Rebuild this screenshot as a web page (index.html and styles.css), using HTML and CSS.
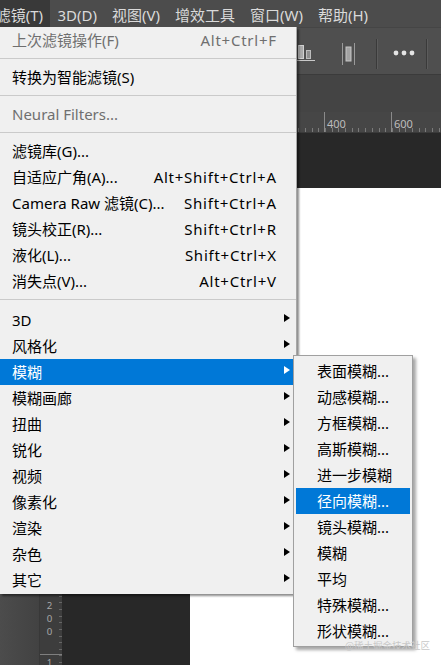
FILE: index.html
```html
<!DOCTYPE html>
<html lang="zh-CN">
<head>
<meta charset="utf-8">
<title>滤镜菜单</title>
<link rel="stylesheet" href="styles.css">
</head>
<body>
<div class="app">
  <div class="menubar">
    <div class="mb-item mb-first"><span>滤镜(T)</span></div>
    <div class="mb-item">3D(D)</div>
    <div class="mb-item">视图(V)</div>
    <div class="mb-item">增效工具</div>
    <div class="mb-item">窗口(W)</div>
    <div class="mb-item">帮助(H)</div>
  </div>
  <div class="optbar">
    <svg class="ic-align" width="22" height="18" viewBox="0 0 22 18">
      <rect x="3.5" y="1.5" width="5" height="13" fill="#a9a9a9" stroke="#d0d0d0" stroke-width="1"/>
      <rect x="11.5" y="6.5" width="4" height="8" fill="#8e8e8e" stroke="#bdbdbd" stroke-width="1"/>
      <line x1="0" y1="16.5" x2="20" y2="16.5" stroke="#c9c9c9" stroke-width="1"/>
    </svg>
    <svg class="ic-dist" width="15" height="22" viewBox="0 0 15 22">
      <line x1="1.5" y1="0" x2="1.5" y2="22" stroke="#9a9a9a" stroke-width="1"/>
      <line x1="13.5" y1="0" x2="13.5" y2="22" stroke="#9a9a9a" stroke-width="1"/>
      <rect x="5" y="4" width="5" height="14" fill="#a3a3a3" stroke="#c6c6c6" stroke-width="1"/>
    </svg>
    <span class="opt-sep sep-a"></span>
    <svg class="ic-more" width="22" height="6" viewBox="0 0 22 6">
      <circle cx="3" cy="3" r="2.4" fill="#e4e4e4"/>
      <circle cx="11" cy="3" r="2.4" fill="#e4e4e4"/>
      <circle cx="19" cy="3" r="2.4" fill="#e4e4e4"/>
    </svg>
    <span class="opt-sep sep-b"></span>
  </div>
  <div class="tabbar"></div>
  <div class="hruler">
    <div class="hseg"></div>
    <div class="hseg"></div>
    <div class="hseg"><span>400</span></div>
    <div class="hseg"><span>600</span></div>
  </div>
  <div class="main">
    <div class="leftpanel"></div>
    <div class="vruler">
      <div class="vseg"></div>
      <div class="vseg"></div>
      <div class="vseg"></div>
      <div class="vseg"></div>
      <div class="vseg"></div>
      <div class="vseg"></div>
      <div class="vseg vseg-a"><span class="vlabel">200</span></div>
      <div class="vseg"><span class="vlabel">1400</span></div>
    </div>
    <div class="pasteboard">
      <div class="canvas"></div>
    </div>
  </div>

  <div class="menu">
    <div class="mi disabled"><span class="lbl">上次滤镜操作(F)</span><span class="sc">Alt+Ctrl+F</span><span class="ar"></span></div>
    <div class="msep"></div>
    <div class="mi"><span class="lbl">转换为智能滤镜(S)</span><span class="sc"></span><span class="ar"></span></div>
    <div class="msep"></div>
    <div class="mi disabled"><span class="lbl">Neural Filters...</span><span class="sc"></span><span class="ar"></span></div>
    <div class="msep"></div>
    <div class="mi"><span class="lbl">滤镜库(G)...</span><span class="sc"></span><span class="ar"></span></div>
    <div class="mi"><span class="lbl">自适应广角(A)...</span><span class="sc">Alt+Shift+Ctrl+A</span><span class="ar"></span></div>
    <div class="mi"><span class="lbl">Camera Raw 滤镜(C)...</span><span class="sc">Shift+Ctrl+A</span><span class="ar"></span></div>
    <div class="mi"><span class="lbl">镜头校正(R)...</span><span class="sc">Shift+Ctrl+R</span><span class="ar"></span></div>
    <div class="mi"><span class="lbl">液化(L)...</span><span class="sc">Shift+Ctrl+X</span><span class="ar"></span></div>
    <div class="mi"><span class="lbl">消失点(V)...</span><span class="sc">Alt+Ctrl+V</span><span class="ar"></span></div>
    <div class="msep msep-wide"></div>
    <div class="mi"><span class="lbl">3D</span><span class="sc"></span><span class="ar"><i class="tri"></i></span></div>
    <div class="mi"><span class="lbl">风格化</span><span class="sc"></span><span class="ar"><i class="tri"></i></span></div>
    <div class="mi hl"><span class="lbl">模糊</span><span class="sc"></span><span class="ar"><i class="tri"></i></span></div>
    <div class="mi"><span class="lbl">模糊画廊</span><span class="sc"></span><span class="ar"><i class="tri"></i></span></div>
    <div class="mi"><span class="lbl">扭曲</span><span class="sc"></span><span class="ar"><i class="tri"></i></span></div>
    <div class="mi"><span class="lbl">锐化</span><span class="sc"></span><span class="ar"><i class="tri"></i></span></div>
    <div class="mi"><span class="lbl">视频</span><span class="sc"></span><span class="ar"><i class="tri"></i></span></div>
    <div class="mi"><span class="lbl">像素化</span><span class="sc"></span><span class="ar"><i class="tri"></i></span></div>
    <div class="mi"><span class="lbl">渲染</span><span class="sc"></span><span class="ar"><i class="tri"></i></span></div>
    <div class="mi"><span class="lbl">杂色</span><span class="sc"></span><span class="ar"><i class="tri"></i></span></div>
    <div class="mi"><span class="lbl">其它</span><span class="sc"></span><span class="ar"><i class="tri"></i></span></div>
  </div>

  <div class="submenu">
    <div class="si">表面模糊...</div>
    <div class="si">动感模糊...</div>
    <div class="si">方框模糊...</div>
    <div class="si">高斯模糊...</div>
    <div class="si">进一步模糊</div>
    <div class="si hl">径向模糊...</div>
    <div class="si">镜头模糊...</div>
    <div class="si">模糊</div>
    <div class="si">平均</div>
    <div class="si">特殊模糊...</div>
    <div class="si">形状模糊...</div>
  </div>

  <div class="watermark">@稀土掘金技术社区</div>
</div>
</body>
</html>
```
FILE: styles.css
```css
* { box-sizing: border-box; margin: 0; padding: 0; }
html, body { width: 441px; height: 665px; overflow: hidden; }
body {
  font-family: "Noto Sans", "Noto Sans CJK SC", sans-serif;
  background: #282828;
}
.app {
  position: relative;
  width: 441px;
  height: 665px;
  display: flex;
  flex-direction: column;
  overflow: hidden;
}

/* top menubar */
.menubar {
  flex: 0 0 27px;
  display: flex;
  background: #4c4c4c;
  color: #dadada;
  font-size: 15px;
  line-height: 24px;
  padding-top: 3px;
  white-space: nowrap;
}
.mb-item { padding: 0 7.5px; }
.mb-first {
  flex: 0 0 50px;
  display: flex;
  justify-content: flex-end;
  padding: 3px 7px 0 0;
  margin-top: -3px;
  background: #393939;
  overflow: hidden;
}

/* options bar */
.optbar {
  flex: 0 0 47px;
  display: flex;
  align-items: center;
  justify-content: flex-end;
  padding-right: 13px;
  background: #4f4f4f;
  border-top: 1px solid #454545;
}
.ic-align { margin-top: 4px; }
.ic-dist { margin-left: 24px; margin-top: 6px; }
.opt-sep {
  width: 2px;
  height: 30px;
  background: #3a3a3a;
  border-right: 1px solid #5c5c5c;
}
.sep-a { margin-left: 20px; margin-top: 6px; }
.ic-more { margin-left: 15px; margin-top: 3px; }
.sep-b { margin-left: 11px; margin-top: 6px; }

/* tab bar */
.tabbar {
  flex: 0 0 38px;
  background: #444444;
  border-top: 1px solid #3b3b3b;
}

/* horizontal ruler */
.hruler {
  flex: 0 0 21px;
  display: flex;
  padding-left: 190px;
  background: #464646;
  border-bottom: 1px solid #3a3a3a;
}
.hseg {
  flex: 0 0 67px;
  border-left: 1px solid #8a8a8a;
  color: #bdbdbd;
  font-size: 11px;
  line-height: 14px;
  padding: 5px 0 0 2px;
  background:
    repeating-linear-gradient(to right, #7a7a7a 0 1px, transparent 1px 6.7px) left bottom / 100% 4px no-repeat;
}

/* main area */
.main {
  flex: 1;
  display: flex;
}
.leftpanel {
  flex: 0 0 40px;
  background: linear-gradient(to right, #4c4c4c, #424242);
  border-right: 1px solid #383838;
}
.vruler {
  flex: 0 0 22px;
  background: #3d3d3d;
  padding-top: 55px;
  display: flex;
  flex-direction: column;
  overflow: hidden;
}
.vseg {
  flex: 0 0 66.6px;
  border-top: 1px solid #7f7f7f;
  display: flex;
  justify-content: center;
  padding: 1px 4px 0 0;
  background:
    repeating-linear-gradient(to bottom, #666 0 1px, transparent 1px 6.66px) right top / 3px 100% no-repeat;
}
.vseg-a { padding-top: 10px; }
.vlabel {
  writing-mode: vertical-lr;
  text-orientation: upright;
  color: #a8a8a8;
  font-size: 9.7px;
  line-height: 10px;
}
.pasteboard {
  flex: 1;
  background: #282828;
  padding: 55px 0 0 128px;
  display: flex;
}
.canvas { flex: 1; background: #ffffff; }

/* dropdown menu */
.menu {
  position: absolute;
  left: 0;
  top: 27px;
  width: 297px;
  padding: 0 3px 1px 0;
  background: #f0f0f0;
  border-right: 1px solid #a7a7a7;
  box-shadow: 2px 2px 2px rgba(0, 0, 0, 0.45);
  font-size: 15px;
  color: #000;
  white-space: nowrap;
}
.mi {
  display: grid;
  grid-template-columns: 1fr auto 17px;
  align-items: center;
  height: 26px;
  padding-left: 12px;
}
.lbl, .sc { padding-top: 4px; line-height: 18px; margin-bottom: 4px; }
.sc { letter-spacing: 0.75px; margin-right: -0.75px; }
.mi.disabled { color: #6f6f6f; }
.mi.hl { background: #0078d7; color: #ffffff; }
.ar {
  display: flex;
  align-items: center;
  height: 26px;
  padding: 0 0 4px 8px;
}
.tri {
  display: block;
  width: 0;
  height: 0;
  border-left: 6px solid #000;
  border-top: 4.5px solid transparent;
  border-bottom: 4.5px solid transparent;
}
.mi.hl .tri { border-left-color: #ffffff; }
.msep {
  height: 1px;
  margin: 5px -3px 5px 0;
  background: #cacaca;
}
.msep-wide { margin-bottom: 7px; }

/* submenu */
.submenu {
  position: absolute;
  left: 293px;
  top: 355px;
  width: 120px;
  padding: 2px;
  background: #f0f0f0;
  border: 1px solid #a0a0a0;
  box-shadow: 3px 3px 3px rgba(0, 0, 0, 0.35);
  font-size: 15px;
  color: #000;
  white-space: nowrap;
}
.si {
  height: 26px;
  padding: 4.5px 0 0 21px;
  line-height: 17px;
}
.si.hl { background: #0078d7; color: #ffffff; }

.watermark {
  position: absolute;
  left: 345px;
  top: 641px;
  font-family: "Noto Sans CJK SC", sans-serif;
  font-size: 9.5px;
  line-height: 9px;
  color: #c8c8c8;
  white-space: nowrap;
}
```
